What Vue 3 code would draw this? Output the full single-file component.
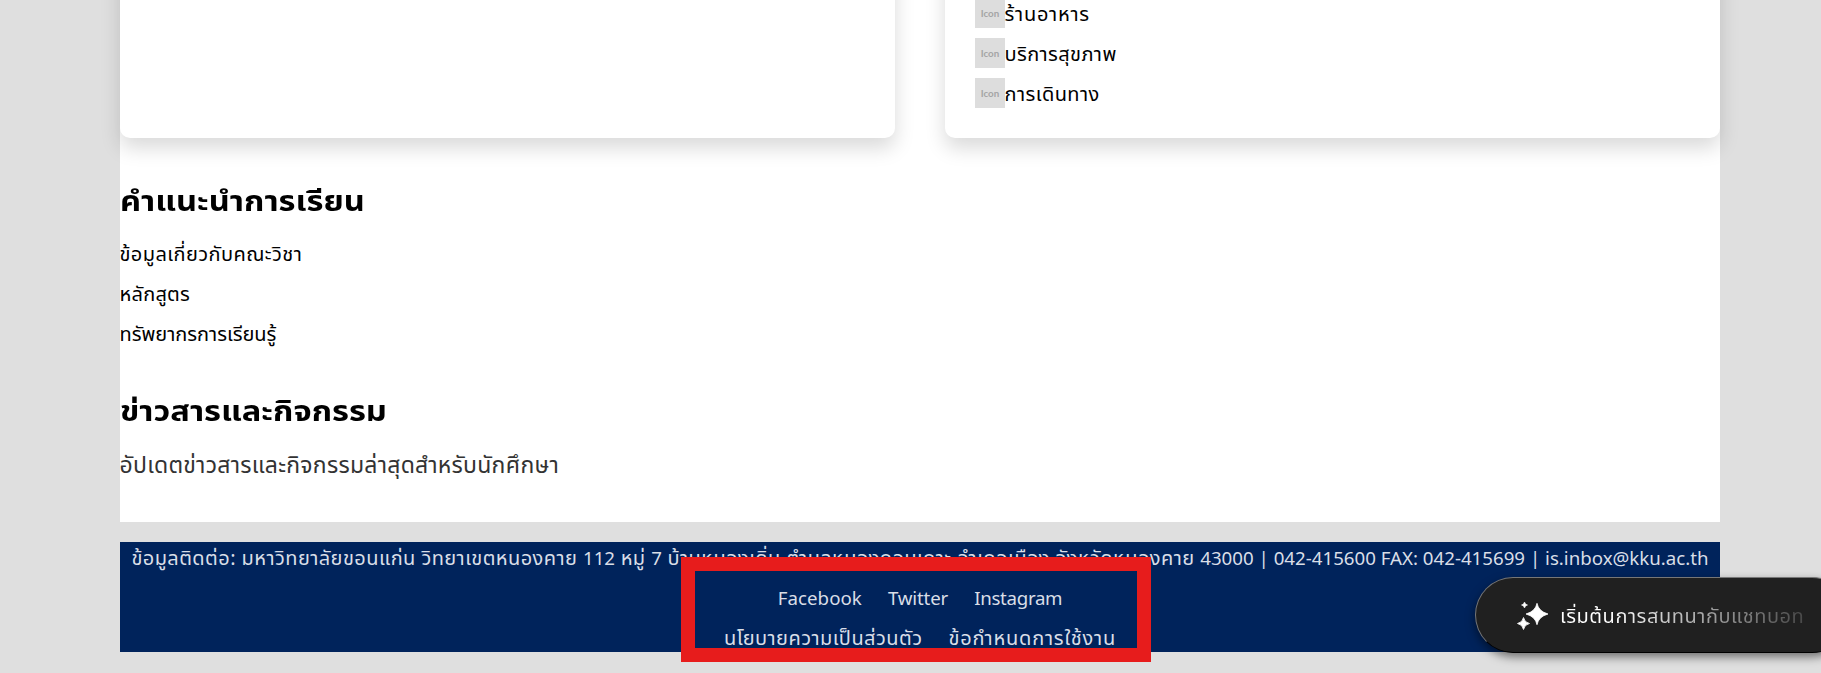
<script setup>
const services = [
  { text: 'ร้านอาหาร', track: 0.75 },
  { text: 'บริการสุขภาพ', track: 0.4 },
  { text: 'การเดินทาง', track: 0.45 },
]
const guides = [
  { text: 'ข้อมูลเกี่ยวกับคณะวิชา', track: 0.42 },
  { text: 'หลักสูตร', track: 0.25 },
  { text: 'ทรัพยากรการเรียนรู้', track: 0 },
]
const socials = [
  { text: 'Facebook', track: 0.05 },
  { text: 'Twitter', track: -0.15 },
  { text: 'Instagram', track: -0.3 },
]
const policies = [
  { text: 'นโยบายความเป็นส่วนตัว', track: 0.45 },
  { text: 'ข้อกำหนดการใช้งาน', track: 0.8 },
]
const tracking = (item) => ({ letterSpacing: item.track + 'px' })
</script>

<template>
  <div class="page">
    <main class="content">
      <div class="cards">
        <section class="card"></section>
        <section class="card">
          <a v-for="s in services" :key="s.text" class="service"><span class="icon">Icon</span><span class="label" :style="tracking(s)">{{ s.text }}</span></a>
        </section>
      </div>
      <section class="guides">
        <h2>คำแนะนำการเรียน</h2>
        <a v-for="g in guides" :key="g.text" class="guide" :style="tracking(g)">{{ g.text }}</a>
      </section>
      <section class="news">
        <h2>ข่าวสารและกิจกรรม</h2>
        <p>อัปเดตข่าวสารและกิจกรรมล่าสุดสำหรับนักศึกษา</p>
      </section>
    </main>
    <footer class="footer">
      <p class="row"><span class="contact">ข้อมูลติดต่อ: มหาวิทยาลัยขอนแก่น วิทยาเขตหนองคาย <span class="latin">112</span> หมู่ <span class="latin">7</span> บ้านหนองเดิ่น ตำบลหนองกอมเกาะ อำเภอเมือง จังหวัดหนองคาย <span class="latin">43000 | 042-415600 FAX: 042-415699 | is.inbox@kku.ac.th</span></span></p>
      <nav class="row"><a v-for="s in socials" :key="s.text" class="latin" :style="tracking(s)">{{ s.text }}</a></nav>
      <nav class="row"><a v-for="p in policies" :key="p.text" :style="tracking(p)">{{ p.text }}</a></nav>
    </footer>
    <div class="marker"></div>
    <button class="chat">
      <svg class="sparkle" width="32" height="30" viewBox="0 0 32 30" fill="#fff">
        <path d="M20 3.300Q21.500 11.300 31 14Q21.500 16.700 20 24.700Q18.500 16.700 9 14Q18.500 11.300 20 3.300Z" stroke="#fff" stroke-width=".8" stroke-linejoin="round" />
        <path d="M6.500 17.500Q7.500 22.500 12.500 23.500Q7.500 24.500 6.500 29.500Q5.500 24.500 .5 23.500Q5.500 22.500 6.500 17.500Z" stroke="#fff" stroke-width=".8" stroke-linejoin="round" />
        <path d="M7.500 2Q8 4.500 10.500 5Q8 5.500 7.500 8Q7 5.500 4.500 5Q7 4.500 7.500 2Z" stroke="#fff" stroke-width=".6" stroke-linejoin="round" />
      </svg>
      <span class="chat-text">เริ่มต้นการสนทนากับแชทบอท</span>
    </button>
  </div>
</template>

<style>
body { background: #dfdfdf; }
</style>

<style scoped>
.page {
  position: relative;
  width: 1821px;
  height: 673px;
  overflow: hidden;
  background: #dfdfdf;
  font-family: "Segoe UI", Tahoma, "Noto Sans Thai", "Noto Sans", sans-serif;
  font-size: 20px;
  color: #000;
}
.content {
  box-sizing: border-box;
  width: 1600px;
  height: 522px;
  margin: 0 auto 0 120px;
  background: #fff;
}
.cards { display: grid; grid-template-columns: 1fr 1fr; gap: 50px; height: 138px; }
.card {
  height: 188px;
  margin-top: -50px;
  box-sizing: border-box;
  border-radius: 10px;
  background: #fff;
  box-shadow: 0 10px 20px rgba(0, 0, 0, .15);
  padding: 48px 30px 0;
}
.service { display: flex; align-items: center; height: 30px; margin-bottom: 10px; white-space: nowrap; }
.label { margin-left: -.5px; padding-top: 3px; }
.icon {
  width: 30px; height: 30px; text-align: center;
  background: #ddd; color: #a5a5a5; font: 700 9.8px/30px Lato, sans-serif;
}
h2 {
  margin: 0; font-size: 29px; line-height: 42px; height: 40px; font-weight: 700; white-space: nowrap;
  transform: scaleX(1.125); transform-origin: left center;
}
.guides { padding-top: 43px; margin-left: -.5px; }
.guide { display: block; height: 40px; line-height: 40px; white-space: nowrap; }
.guides h2 { margin-bottom: 14px; }
.news { padding-top: 36px; margin-left: -.5px; }
.news p { margin: 15px 0 0; font-size: 23px; line-height: 40px; letter-spacing: .26px; color: #333; white-space: nowrap; }
.footer {
  box-sizing: border-box;
  width: 1600px; height: 110px; margin: 20px 0 0 120px; padding-top: 1px;
  background: #00235b; color: #d9dee7;
}
.row { display: flex; justify-content: center; height: 40px; line-height: 32px; margin: 0; white-space: nowrap; gap: 26px; }
.contact { letter-spacing: .43px; }
.latin { font-size: 18.7px; letter-spacing: 0; }
.marker {
  position: absolute; left: 681px; top: 557px; box-sizing: border-box;
  width: 470px; height: 105px; border: 14px solid #e71c1c;
}
.chat {
  position: absolute; left: 1475px; top: 577px;
  display: flex; align-items: center; box-sizing: border-box;
  width: 375px; height: 76px; padding: 0 0 0 41px;
  border: 1px solid #777; border-bottom-color: #000; border-radius: 38px;
  background: #202020; box-shadow: 0 4px 10px rgba(0, 0, 0, .5);
  font: 20px "Segoe UI", Tahoma, "Noto Sans Thai", "Noto Sans", sans-serif;
}
.chat-text {
  margin-left: 11px; padding-top: 3px; white-space: nowrap; letter-spacing: .54px;
  background: linear-gradient(90deg, #fff 0, #fff 20%, #484848 100%);
  -webkit-background-clip: text; background-clip: text; color: transparent;
}
</style>
